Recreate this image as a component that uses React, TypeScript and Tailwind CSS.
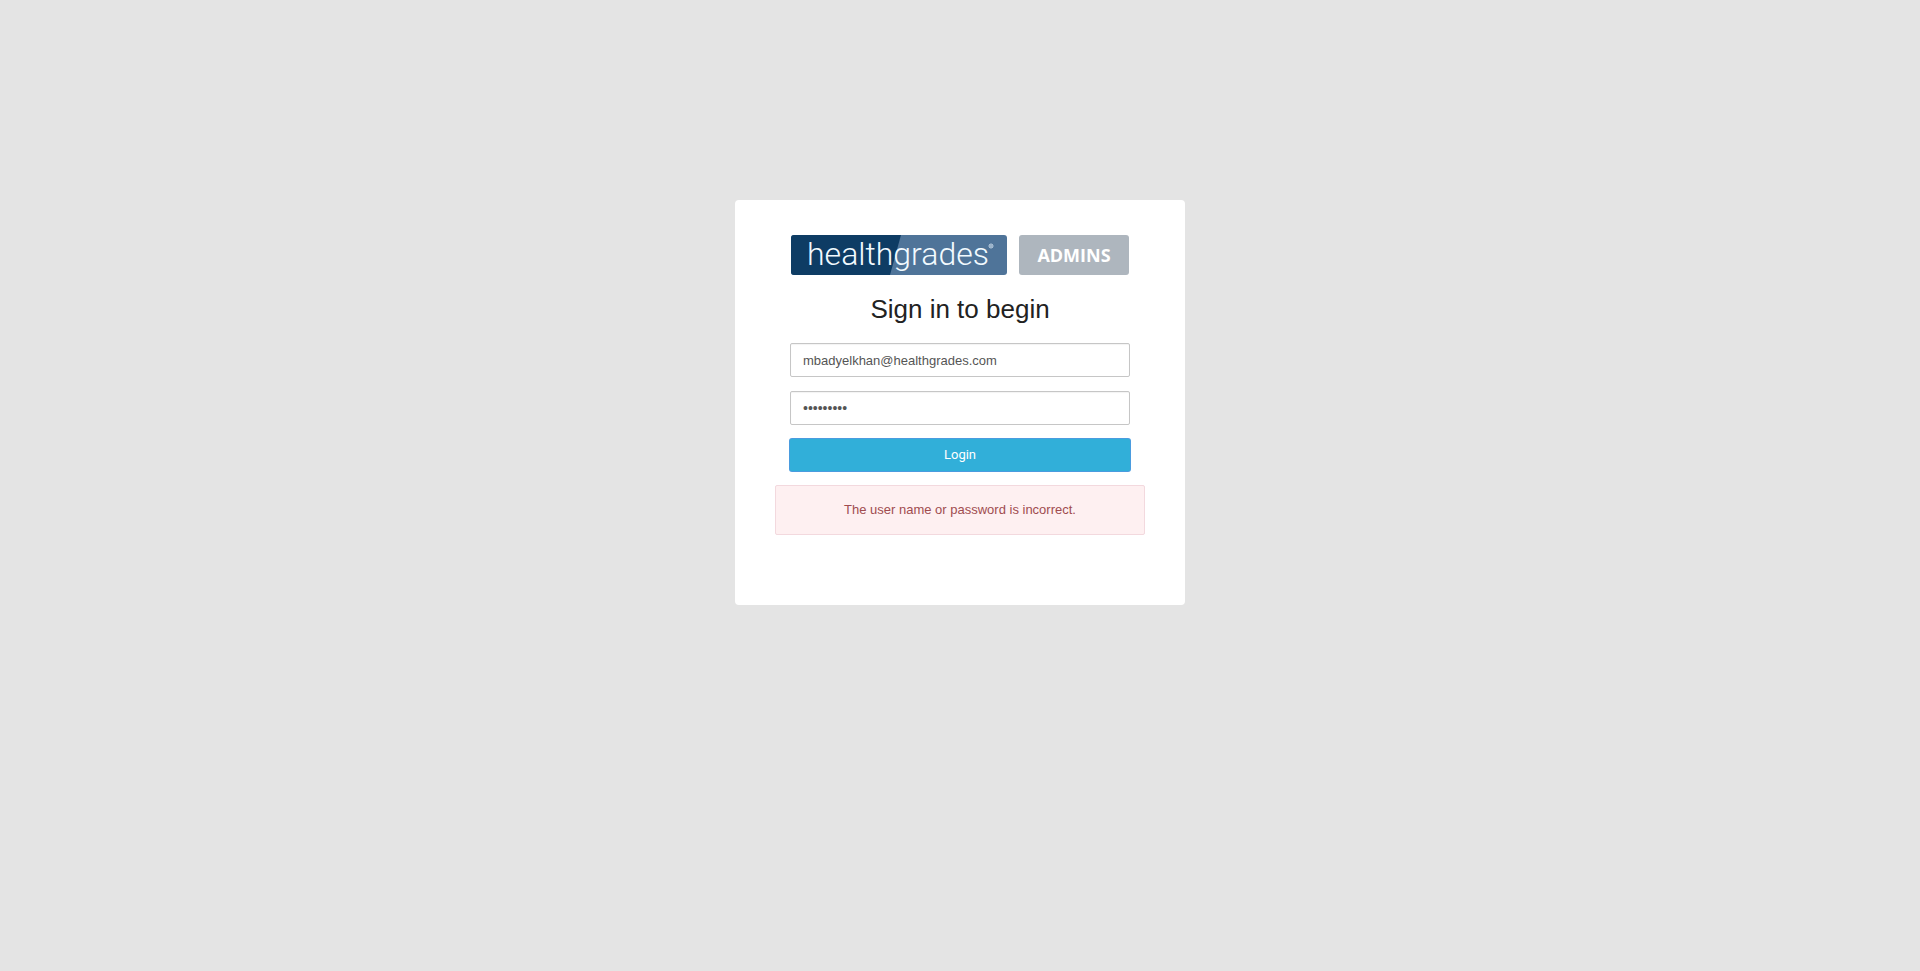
import { useState } from 'react';

function HealthgradesLogo() {
  return (
    <svg width="216" height="40" viewBox="0 0 216 40" role="img" aria-label="healthgrades" className="overflow-visible">
      <defs>
        <clipPath id="logo-plate">
          <rect width="216" height="40" rx="3" />
        </clipPath>
      </defs>
      <g clipPath="url(#logo-plate)">
        <rect width="216" height="40" fill="#4f7499" />
        <path d="M0 0H110L99 40H0Z" fill="#0e3c64" />
      </g>
      <text x="16" y="30" fontSize="32" className="fill-[#f2faff] font-['Roboto',sans-serif] font-light">
        healthgrades
      </text>
      <circle cx="200" cy="11" r="2" fill="none" stroke="#c4d6e6" strokeWidth="1" />
      <circle cx="200" cy="11" r="1" fill="#b4c8da" />
    </svg>
  );
}

export default function App() {
  const [email, setEmail] = useState('mbadyelkhan@healthgrades.com');
  const [password, setPassword] = useState('password1');

  const field =
    'block h-[34px] w-full rounded-xs border border-[#c6c6c6] bg-white px-3 text-[#555] shadow-[inset_0_1px_1px_rgba(0,0,0,0.05)] outline-none';

  return (
    <main className="flex min-h-screen flex-col items-center bg-[#e4e4e4] px-4 pt-[200px] pb-10 font-['Liberation_Sans',Arial,sans-serif]">
      <section className="w-full max-w-[450px] rounded-sm bg-white px-10 pt-[35px] pb-[70px]">
        <form className="px-[15px]" onSubmit={(e) => e.preventDefault()}>
          <div className="flex items-center justify-center gap-3">
            <HealthgradesLogo />
            <span className="flex h-10 w-[110px] items-center justify-center rounded-[3px] bg-[#aeb6be] font-['Open_Sans',sans-serif] text-lg font-bold text-white">
              ADMINS
            </span>
          </div>
          <h1 className="mt-4 text-center text-[26px] leading-9 text-[#222]">Sign in to begin</h1>
          <div className="mt-4 flex flex-col gap-[14px]">
            <input
              type="email"
              aria-label="Email"
              className={`${field} text-[13px]`}
              value={email}
              onChange={(e) => setEmail(e.target.value)}
            />
            <input
              type="password"
              aria-label="Password"
              className={`${field} text-sm`}
              value={password}
              onChange={(e) => setPassword(e.target.value)}
            />
            <button
              type="submit"
              className="h-8 w-full rounded-xs bg-[#31afd9] font-['Roboto',sans-serif] text-[13px] text-white ring-1 ring-[#4a9cdf]"
            >
              Login
            </button>
          </div>
        </form>
        <div
          role="alert"
          className="mt-[14px] flex h-[50px] items-center justify-center rounded-xs border border-[#f3d9de] bg-[#fef0f1] text-[13px] text-[#a04c4f]"
        >
          The user name or password is incorrect.
        </div>
      </section>
    </main>
  );
}
